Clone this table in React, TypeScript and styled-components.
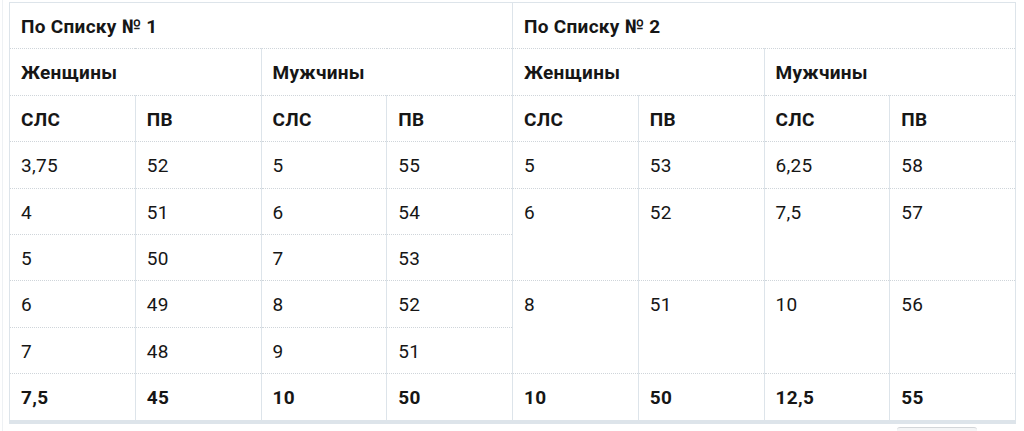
import React from "react";
import styled, { createGlobalStyle } from "styled-components";

const lineColor = "#dde4ea";
const dotColor = "#cfd5da";

const GlobalStyle = createGlobalStyle`
    html, body {
        margin: 0;
        padding: 0;
        background: #ffffff;
        font-family: Roboto, "Noto Sans", "Liberation Sans", sans-serif;
        color: #161616;
    }
`;

const Page = styled.div`
    position: relative;
    height: 431px;
    overflow: hidden;
    padding: 2px 9px 0 6px;
    margin-left: 2px;
    box-sizing: border-box;
    border-left: 1px solid #eef1f4;
`;

const Table = styled.table`
    width: 1007px;
    table-layout: fixed;
    border-collapse: collapse;
    border: 1px solid ${lineColor};
    border-bottom: 4px solid ${lineColor};
    font-size: 19px;
    letter-spacing: 0.3px;
    line-height: 24px;
`;

const Cell = styled.td<{ $bold?: boolean }>`
    padding: 12px 11px 9.4px;
    vertical-align: top;
    text-align: left;
    font-weight: ${(p) => (p.$bold ? 700 : 400)};
    border-left: 1px solid ${lineColor};
    border-right: 1px solid ${lineColor};
    border-bottom: 1px dotted ${dotColor};
    white-space: nowrap;
`;

const Footer = styled.div`
    display: flex;
    justify-content: flex-end;
    padding: 3px 38px 0 0;
`;

const Handle = styled.div`
    width: 80px;
    height: 6px;
    border-radius: 3px 3px 0 0;
    border-top: 1px solid #d3d6d9;
    background: #f4f5f6;
`;

type Row = { v: string; span?: number }[];

const list1: string[][] = [
    ["3,75", "52", "5", "55"],
    ["4", "51", "6", "54"],
    ["5", "50", "7", "53"],
    ["6", "49", "8", "52"],
    ["7", "48", "9", "51"],
];

// second list merges rows in pairs after the first one
const list2: (Row | null)[] = [
    [{ v: "5" }, { v: "53" }, { v: "6,25" }, { v: "58" }],
    [{ v: "6", span: 2 }, { v: "52", span: 2 }, { v: "7,5", span: 2 }, { v: "57", span: 2 }],
    [],
    [{ v: "8", span: 2 }, { v: "51", span: 2 }, { v: "10", span: 2 }, { v: "56", span: 2 }],
    [],
];

const totals = ["7,5", "45", "10", "50", "10", "50", "12,5", "55"];

const App: React.FC = () => {
    return (
        <Page>
            <GlobalStyle />
            <Table>
                <tbody>
                    <tr>
                        <Cell $bold colSpan={4}>По Списку № 1</Cell>
                        <Cell $bold colSpan={4}>По Списку № 2</Cell>
                    </tr>
                    <tr>
                        <Cell $bold colSpan={2}>Женщины</Cell>
                        <Cell $bold colSpan={2}>Мужчины</Cell>
                        <Cell $bold colSpan={2}>Женщины</Cell>
                        <Cell $bold colSpan={2}>Мужчины</Cell>
                    </tr>
                    <tr>
                        {[0, 1, 2, 3].map((i) => (
                            <React.Fragment key={i}>
                                <Cell $bold>СЛС</Cell>
                                <Cell $bold>ПВ</Cell>
                            </React.Fragment>
                        ))}
                    </tr>
                    {list1.map((row, i) => (
                        <tr key={i}>
                            {row.map((v, j) => (
                                <Cell key={j}>{v}</Cell>
                            ))}
                            {(list2[i] || []).map((c, j) => (
                                <Cell key={"b" + j} rowSpan={c.span}>{c.v}</Cell>
                            ))}
                        </tr>
                    ))}
                    <tr>
                        {totals.map((v, i) => (
                            <Cell $bold key={i}>{v}</Cell>
                        ))}
                    </tr>
                </tbody>
            </Table>
            <Footer>
                <Handle />
            </Footer>
        </Page>
    );
};

export default App;
